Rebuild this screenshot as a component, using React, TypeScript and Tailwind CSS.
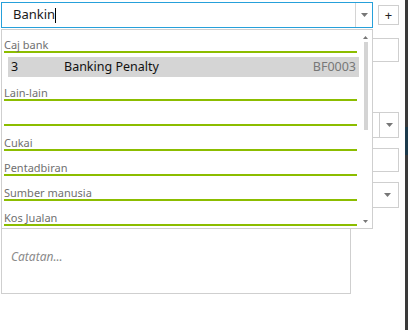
const groups = ["Lain-lain", "", "Cukai", "Pentadbiran", "Sumber manusia", "Kos Jualan"];

function Arrow({ className = "" }: { className?: string }) {
  return (
    <svg width="7" height="4" viewBox="0 0 7 4" className={className}>
      <path d="M0 0h7L3.5 4z" fill="#777" />
    </svg>
  );
}

function GroupHeader({ label, h }: { label: string; h: string }) {
  return (
    <div className={`${h} flex items-end border-b-2 border-[#8cbd00]`}>
      <span className="text-[11px] leading-[13px] text-[#707070]">{label}</span>
    </div>
  );
}

export default function App() {
  return (
    <div
      className="w-[408px] h-[330px] bg-white flex overflow-hidden"
      style={{ fontFamily: "'Noto Sans', 'Open Sans', sans-serif" }}
    >
      <div className="relative flex-1 pl-[1px]">
        {/* form behind the dropdown */}
        <div className="flex items-start gap-[5px] mt-[2px]">
          <div className="w-[372px] h-[26px] border border-[#26a0da] flex items-center">
            <div className="flex-1 pl-[11px] text-[13px] text-[#1a1a1a] flex items-center">
              Bankin<span className="inline-block w-px h-[15px] bg-black" />
            </div>
            <div className="w-[17px] h-full border-l border-[#d4d4d4] flex items-center justify-center">
              <Arrow />
            </div>
          </div>
          <button className="mt-[3px] w-[21px] h-[20px] border border-[#cfcfcf] flex items-center justify-center text-[13px] leading-none text-[#222]">
            +
          </button>
        </div>
        <div className="mt-[10px] w-[398px] h-[24px] border border-[#cfcfcf]" />
        <div className="mt-[50px] w-[398px] h-[26px] border border-[#cfcfcf] flex justify-end">
          <div className="w-[19px] border-l border-[#cfcfcf] flex items-center justify-center">
            <Arrow />
          </div>
        </div>
        <div className="mt-[10px] w-[398px] h-[24px] border border-[#cfcfcf]" />
        <div className="mt-[10px] w-[398px] h-[26px] border border-[#cfcfcf] flex items-center justify-end pr-[7px]">
          <Arrow />
        </div>
        <div className="mt-[20px] w-[350px] h-[66px] border border-[#cfcfcf] px-[9px] pt-[14px]">
          <span className="text-[12px] italic text-[#8a8a8a]">Catatan...</span>
        </div>

        {/* dropdown popup */}
        <div className="absolute left-[1px] top-[29px] w-[372px] h-[200px] bg-white border border-[#cfcfcf] overflow-hidden">
          <div className="w-[355px] pl-[2px]">
            <GroupHeader label="Caj bank" h="h-[23px]" />
            <div className="mt-[4px] ml-[4px] w-[351px] h-[20px] bg-[#d5d5d5] flex items-center text-[12.5px] text-[#111]">
              <span className="w-[56px] pl-[3px]">3</span>
              <span className="flex-1">Banking Penalty</span>
              <span className="pr-[3px] text-[#777]">BF0003</span>
            </div>
            {groups.map((g, i) => (
              <GroupHeader key={i} label={g} h={i === 0 ? "h-[24px]" : "h-[25px]"} />
            ))}
          </div>
          {/* scrollbar */}
          <div className="absolute right-[4px] top-0 bottom-0 w-[5px] flex flex-col items-center">
            <svg width="5" height="3" viewBox="0 0 5 3" className="mt-[6px]">
              <path d="M0 3h5L2.5 0z" fill="#777" />
            </svg>
            <div className="mt-[3px] w-[4px] h-[88px] bg-[#d4d4d4]" />
            <div className="flex-1" />
            <svg width="5" height="3" viewBox="0 0 5 3" className="mb-[5px]">
              <path d="M0 0h5L2.5 3z" fill="#777" />
            </svg>
          </div>
        </div>
      </div>
      <div className="w-[3px] h-full bg-[#3a3a3a] flex flex-col">
        <div className="mt-[127px] h-[28px] bg-[#1d3b4c]" />
      </div>
    </div>
  );
}
